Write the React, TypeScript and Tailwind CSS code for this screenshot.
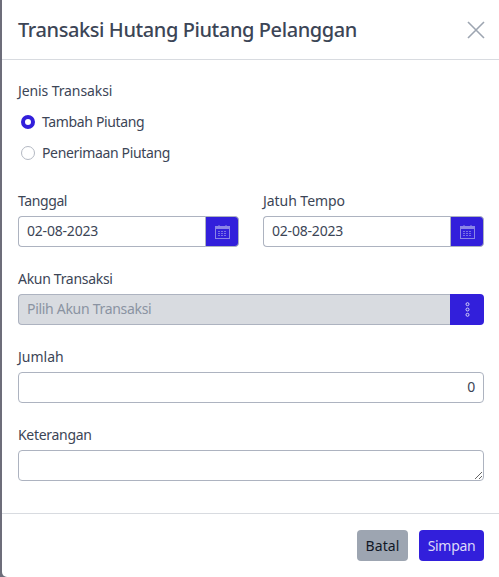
import React from 'react';

const CalendarIcon = () => (
  <svg width="15" height="14" viewBox="0 0 15 14" fill="none" className="text-[#8b85e6]">
    <rect x="0.5" y="1.5" width="14" height="12" stroke="currentColor" />
    <rect x="1" y="2" width="13" height="2" fill="currentColor" />
    <path d="M4 0v2M11 0v2" stroke="currentColor" />
    <path d="M3 6.5h9M3 8.5h9M3 10.5h9" stroke="currentColor" strokeDasharray="2 1" opacity="0.8" />
  </svg>
);

const DotsIcon = () => (
  <svg width="5" height="15" viewBox="0 0 5 15" fill="none" className="text-[#d6d3f7]">
    <circle cx="2.5" cy="2.2" r="1.5" stroke="currentColor" />
    <circle cx="2.5" cy="7.5" r="1.5" stroke="currentColor" />
    <circle cx="2.5" cy="12.8" r="1.5" stroke="currentColor" />
  </svg>
);

const DateField = ({ label, value, labelClass }: { label: string; value: string; labelClass: string }) => (
  <div className="flex-1">
    <div className={`mb-[5px] h-[21px] text-[14px] leading-[21px] ${labelClass}`}>{label}</div>
    <div className="flex h-[31px]">
      <div className="flex-1 rounded-l-[4px] border border-r-0 border-[#adb3c0] bg-white px-2 text-[14px] leading-[28px] tracking-[-0.2px]">
        {value}
      </div>
      <div className="flex w-[34px] items-center justify-center rounded-r-[4px] border border-[#adb3c0] bg-[#321fdb]">
        <CalendarIcon />
      </div>
    </div>
  </div>
);

const Radio = ({ label, checked }: { label: string; checked?: boolean }) => (
  <div className="flex h-[21px] items-center pl-[3px]">
    {checked ? (
      <span className="h-[14px] w-[14px] rounded-full border-[4px] border-[#321fdb] bg-white" />
    ) : (
      <span className="h-[14px] w-[14px] rounded-full border border-[#b4b9c3] bg-white" />
    )}
    <span className="ml-[7px] text-[14px] tracking-[-0.35px]">{label}</span>
  </div>
);

export default function App() {
  return (
    <div className="flex h-[577px] w-[499px] overflow-hidden bg-[#6d6d7a] font-['Noto_Sans',sans-serif] tracking-[-0.3px] text-[#3c4556]">
      <div className="w-[2px] shrink-0" />
      <div className="flex-1 rounded-bl-[5px] bg-white">
        <div className="flex h-[60px] items-center justify-between border-b border-[#d8dbe0] pl-4 pr-[14px]">
          <div className="text-[20px] font-medium leading-[24px] tracking-[-0.41px]">Transaksi Hutang Piutang Pelanggan</div>
          <svg width="18" height="18" viewBox="0 0 18 18" fill="none" className="text-[#9da5b1]">
            <path d="M1 1l16 16M17 1L1 17" stroke="currentColor" strokeWidth="1.6" />
          </svg>
        </div>

        <div className="h-[454px] border-b border-[#d8dbe0] pl-4 pr-[15px] pt-5">
          <div className="h-[21px] text-[14px] leading-[21px] tracking-[-0.1px]">Jenis Transaksi</div>
          <div className="mt-[10px] flex flex-col gap-[10px]">
            <Radio label="Tambah Piutang" checked />
            <Radio label="Penerimaan Piutang" />
          </div>

          <div className="mt-[27px] flex gap-6">
            <DateField label="Tanggal" value="02-08-2023" labelClass="tracking-[-0.4px]" />
            <DateField label="Jatuh Tempo" value="02-08-2023" labelClass="tracking-[-0.05px]" />
          </div>

          <div className="mt-[21px] h-[21px] text-[14px] leading-[21px]">Akun Transaksi</div>
          <div className="mt-[5px] flex h-[31px]">
            <div className="flex-1 rounded-l-[4px] border border-r-0 border-[#adb3c0] bg-[#d8dbe0] px-2 text-[14px] leading-[28px] text-[#8a93a2]">
              Pilih Akun Transaksi
            </div>
            <div className="flex w-[34px] items-center justify-center rounded-r-[4px] bg-[#321fdb]">
              <DotsIcon />
            </div>
          </div>

          <div className="mt-[21px] h-[21px] text-[14px] leading-[21px] tracking-[0px]">Jumlah</div>
          <div className="mt-[5px] h-[31px] rounded-[4px] border border-[#adb3c0] bg-white px-2 text-right text-[14px] leading-[28px]">
            0
          </div>

          <div className="mt-[21px] h-[21px] text-[14px] leading-[21px]">Keterangan</div>
          <textarea
            readOnly
            className="mt-[5px] block h-[31px] w-full rounded-[4px] border border-[#adb3c0] bg-white px-2 text-[14px] outline-none"
          />
        </div>

        <div className="flex justify-end gap-[11px] pr-[15px] pt-4">
          <button className="h-[31px] w-[51px] rounded-[4px] bg-[#9da5b1] text-[14px] tracking-[0.1px] text-[#111827]">Batal</button>
          <button className="h-[31px] w-[65px] rounded-[4px] bg-[#321fdb] text-[14px] text-[#dcdaf8]">Simpan</button>
        </div>
      </div>
    </div>
  );
}
